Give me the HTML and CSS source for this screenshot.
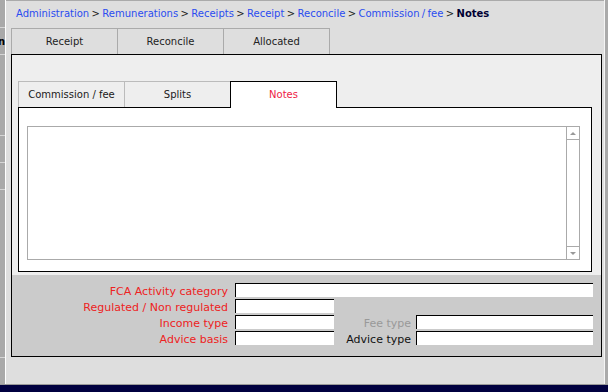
FILE: index.html
```html
<!DOCTYPE html>
<html lang="en">
<head>
  <meta charset="UTF-8">
  <title>Notes</title>
  <link rel="stylesheet" href="styles.css">
</head>
<body>
  <div class="screen">
    <div class="desk">
      <!-- left menu strip, mostly hidden -->
      <div class="sidebar">
        <div class="side-item h28"></div>
        <div class="side-item h27"><span>n</span></div>
        <div class="side-item h81"></div>
        <div class="side-item h27"></div>
        <div class="side-item h27"></div>
        <div class="side-item h168"></div>
        <div class="side-item last"></div>
      </div>

      <div class="main">
        <div class="crumbs">
          <a>Administration</a> &gt; <a>Remunerations</a> &gt; <a>Receipts</a> &gt; <a>Receipt</a> &gt; <a>Reconcile</a> &gt; <a>Commission / fee</a> &gt; <b>Notes</b>
        </div>

        <div class="tabs outer-tabs">
          <div class="tab">Receipt</div>
          <div class="tab">Reconcile</div>
          <div class="tab">Allocated</div>
        </div>

        <div class="panel">
          <div class="panel-top">
            <div class="tabs inner-tabs">
              <div class="tab">Commission / fee</div>
              <div class="tab">Splits</div>
              <div class="tab active">Notes</div>
            </div>
            <div class="sheet">
              <div class="notes-box">
                <textarea class="notes"></textarea>
                <div class="scroll">
                  <div class="scroll-btn up"><i></i></div>
                  <div class="scroll-track"></div>
                  <div class="scroll-btn down"><i></i></div>
                </div>
              </div>
            </div>
          </div>

          <!-- classification fields -->
          <div class="form">
            <label class="req">FCA Activity category</label>
            <div class="field wide"></div>

            <label class="req">Regulated / Non regulated</label>
            <div class="field"></div>
            <div class="blank"></div>

            <label class="req">Income type</label>
            <div class="field"></div>
            <label class="sub off">Fee type</label>
            <div class="field"></div>

            <label class="req">Advice basis</label>
            <div class="field"></div>
            <label class="sub">Advice type</label>
            <div class="field"></div>
          </div>
        </div>
      </div>

      <div class="rightbar"></div>
    </div>
    <div class="taskbar"></div>
  </div>
</body>
</html>
```

FILE: styles.css
```css
body {
  margin: 0;
  font-family: "DejaVu Sans", Verdana, sans-serif;
  font-size: 10px;
  color: #222;
}
.screen {
  width: 608px;
  height: 392px;
  display: flex;
  flex-direction: column;
  overflow: hidden;
}
.desk {
  height: 384px;
  display: flex;
}
.taskbar {
  flex: 1;
  background: #000040;
  border-top: 1px solid #999;
}

/* left strip */
.sidebar {
  width: 5px;
  background: #a9a9a9;
  border-right: 1px solid #fff;
  display: flex;
  flex-direction: column;
}
.side-item {
  border-bottom: 1px solid #d6d6d6;
  overflow: hidden;
  white-space: nowrap;
  direction: rtl;
  font-weight: bold;
  color: #000;
  display: flex;
  align-items: center;
}
.h28 { height: 27px; }
.h27 { height: 26px; }
.h81 { height: 80px; }
.h168 { height: 167px; }
.side-item.last {
  flex: 1;
  border-bottom: none;
}

.rightbar {
  width: 3px;
  background: #aaa;
  border-left: 1px solid #f4f4f4;
}

/* main area */
.main {
  flex: 1;
  background: #dedede;
  border-top: 1px solid #aaa;
  display: flex;
  flex-direction: column;
}
.crumbs {
  height: 21px;
  padding: 6px 0 0 10px;
  line-height: 14px;
  color: #222;
  white-space: nowrap;
  word-spacing: -0.8px;
}
.crumbs a {
  color: #2a4cf0;
}
.crumbs b {
  color: #000033;
}

.tabs {
  display: flex;
  height: 26px;
}
.tab {
  width: 107px;
  box-sizing: border-box;
  border: 1px solid #aaa;
  border-bottom: none;
  text-align: center;
  line-height: 25px;
}
.tab + .tab {
  margin-left: -1px;
}
.outer-tabs {
  margin-left: 5px;
}

.panel {
  margin: 0 2px 0 5px;
  border: 1px solid #000;
  background: #eee;
  display: flex;
  flex-direction: column;
}
.panel-top {
  padding: 26px 9px 3px 6px;
}
.inner-tabs .tab {
  border-color: #bbb;
  color: #1a1a1a;
}
.inner-tabs .tab.active {
  position: relative;
  height: 27px;
  background: #fff;
  border-color: #000;
  color: #ee2244;
}
.sheet {
  background: #fff;
  border: 1px solid #000;
  padding: 18px 11px 11px 8px;
}
.notes-box {
  height: 134px;
  box-sizing: border-box;
  border: 1px solid #aaa;
  display: flex;
}
.notes {
  flex: 1;
  border: none;
  resize: none;
  outline: none;
  overflow: hidden;
  padding: 2px;
  font: inherit;
}
.scroll {
  width: 12px;
  border-left: 1px solid #aaa;
  display: flex;
  flex-direction: column;
}
.scroll-btn {
  height: 12px;
  display: flex;
  align-items: center;
  justify-content: center;
}
.scroll-btn.up {
  border-bottom: 1px solid #aaa;
}
.scroll-btn.down {
  border-top: 1px solid #aaa;
}
.scroll-track {
  flex: 1;
}
.scroll-btn i {
  width: 0;
  height: 0;
  border-left: 3px solid transparent;
  border-right: 3px solid transparent;
}
.up i {
  border-bottom: 3px solid #999;
}
.down i {
  border-top: 3px solid #999;
}

/* fields */
.form {
  background: #cbcbcb;
  padding: 8px 8px 11px 0;
  display: grid;
  grid-template-columns: 223px 99px 82px 1fr;
  grid-auto-rows: 14px;
  row-gap: 2px;
  align-items: center;
  font-size: 11px;
}
.form label {
  text-align: right;
  padding: 2px 7px 0 0;
  color: #111;
  white-space: nowrap;
  line-height: 13px;
}
.form label.sub {
  padding-right: 5px;
}
.form label.req {
  color: #ee2222;
}
.form label.off {
  color: #999;
}
.field {
  height: 14px;
  box-sizing: border-box;
  background: #fff;
  border-top: 1px solid #000;
  border-left: 1px solid #000;
}
.field.wide {
  grid-column: 2 / 5;
}
.blank {
  grid-column: 3 / 5;
}
```
